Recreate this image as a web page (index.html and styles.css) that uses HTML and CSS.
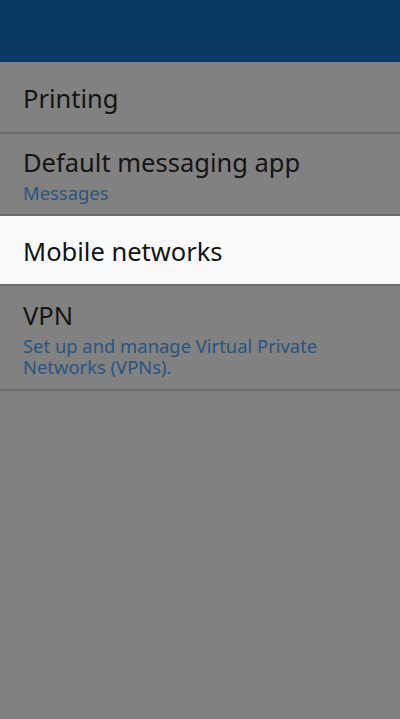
FILE: index.html
```html
<html>
<head>
  <title>Settings</title>
  <link rel="stylesheet" href="styles.css">
</head>
<body>
  <div id="header"></div>

  <div id="list">
    <div class="item printing">
      <div class="title">Printing</div>
    </div>
    <div class="item messaging">
      <div class="title">Default messaging app</div>
      <div class="summary">Messages</div>
    </div>
    <div class="item mobile selected">
      <div class="title">Mobile networks</div>
    </div>
    <div class="item vpn">
      <div class="title">VPN</div>
      <div class="summary">Set up and manage Virtual Private<br>Networks (VPNs).</div>
    </div>
  </div>
</body>
</html>
```

FILE: styles.css
```css
body {
  margin: 0;
  background-color: #808080;
  font-family: "Noto Sans", Roboto, sans-serif;
  height: 719px;
  overflow: hidden;
}

#header {
  height: 62px;
  background-color: #0a3a63;
}

#list {
  background-color: #818181;
}

.item {
  padding-left: 23px;
  border-bottom: 2px solid #6c6c6c;
}

.title {
  font-size: 25.5px;
  line-height: 28px;
  color: #141414;
}

.summary {
  font-size: 18.4px;
  line-height: 21px;
  color: #2a5580;
  margin-top: 6px;
}

.printing {
  padding-top: 22px;
  padding-bottom: 20px;
}

.messaging {
  padding-top: 14px;
  padding-bottom: 11px;
}

.mobile {
  padding-top: 21px;
  padding-bottom: 19px;
}

.vpn {
  padding-top: 15px;
  padding-bottom: 12px;
}

.selected {
  background-color: #fafafa;
}
```
